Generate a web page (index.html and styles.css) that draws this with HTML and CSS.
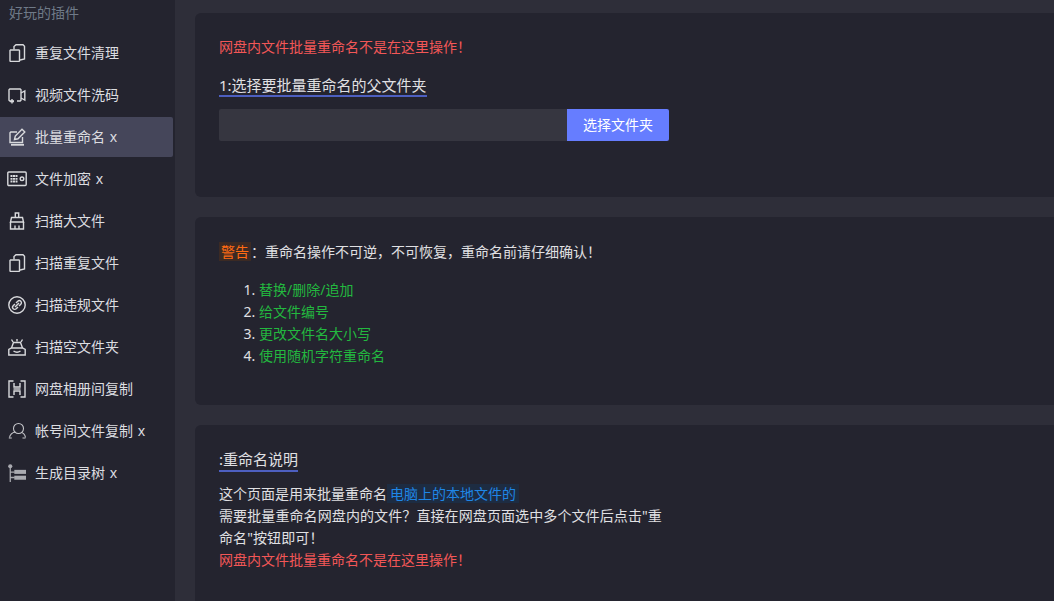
FILE: index.html
```html
<!DOCTYPE html>
<html lang="zh">
<head>
<meta charset="utf-8">
<title>批量重命名</title>
<link rel="stylesheet" href="styles.css">
</head>
<body>
<div class="app">
  <aside class="sidebar">
    <div class="side-title">好玩的插件</div>
    <nav class="menu">
      <a class="item"><svg class="ico" viewBox="0 0 18 18"><path d="M2.500 6h8.500l.5.5V17l-.5.500H2.500L2 17V6.500z"/><path d="M6 5.500V2.500L8 .8h7l1.500 1.500V15l-4.500 1"/></svg><span>重复文件清理</span></a>
      <a class="item"><svg class="ico" viewBox="0 0 18 18"><path d="M6 15H1.800L1 14.200V3.800L1.800 3h10.400l.8.800v10.400l-.8.800H9"/><path d="M13 7l3.800-2v9L13 12"/><path d="M4 13v4.500M2 15.500h4"/></svg><span>视频文件洗码</span></a>
      <a class="item active"><svg class="ico" viewBox="0 0 18 18"><path d="M9 4H2.800L2 4.800V14.500h12.500V9"/><path d="M6.500 11.500l.8-3.500L14 1.200 16.800 4 10 10.800z"/><path class="thick" d="M3 16.800h13"/></svg><span>批量重命名 x</span></a>
      <a class="item"><svg class="ico wide" viewBox="0 0 20 18"><rect x=".8" y="2" width="18.400" height="13.500" rx="1"/><path class="thick dash" d="M3.500 6h7M3.500 8.800h7M3.500 11.500h7"/><circle cx="15" cy="8.800" r="1.800"/></svg><span>文件加密 x</span></a>
      <a class="item"><svg class="ico" viewBox="0 0 18 18"><path d="M7.300 5.500V1h3.400v4.500"/><path d="M3.500 5.500h11l1 4.500h-13z"/><path d="M2.500 10v7h13v-7"/><path d="M7 17v-3.500M11 17v-3.500"/></svg><span>扫描大文件</span></a>
      <a class="item"><svg class="ico" viewBox="0 0 18 18"><path d="M2.500 6h8.500l.5.5V17l-.5.500H2.500L2 17V6.500z"/><path d="M6 5.500V2.500L8 .8h7l1.500 1.500V15l-4.500 1"/></svg><span>扫描重复文件</span></a>
      <a class="item"><svg class="ico wide" viewBox="0 0 18 18"><circle cx="9" cy="9" r="8.200"/><path d="M8 7l1.800-1.800a2.100 2.100 0 0 1 3 3L11 10"/><path d="M10 11l-1.800 1.800a2.100 2.100 0 0 1-3-3L7 8"/><path d="M7 11l4-4"/></svg><span>扫描违规文件</span></a>
      <a class="item"><svg class="ico" viewBox="0 0 18 18"><path d="M.8 17h16.400v-5.500L14.500 10h-11L.8 11.500z"/><path d="M3.500 10l2-5.500h7l2 5.500"/><path d="M5 4L3.500 1.500M13 4l1.500-2.500M9 3.500V1"/><path d="M5.500 13c2 1.500 5 1.500 7 0"/></svg><span>扫描空文件夹</span></a>
      <a class="item"><svg class="ico" viewBox="0 0 18 18"><path d="M5.500 1H1v16h4.500M12.500 1H17v16h-4.500"/><path d="M6 3v4h6V3M6 15v-4h6v4"/><path d="M5.500 9h7"/></svg><span>网盘相册间复制</span></a>
      <a class="item"><svg class="ico thin" viewBox="0 0 18 18"><circle cx="10.500" cy="6.500" r="5"/><path d="M1.500 15.500c.5-3 3-5 6-5.500"/><path d="M13.500 10.500c2 .5 3.500 2.500 4 5"/><path d="M.8 16h3M14.500 16h3"/></svg><span>帐号间文件复制 x</span></a>
      <a class="item"><svg class="ico wide" viewBox="0 0 20 20"><circle class="fill" cx="2.500" cy="2.500" r="2.300"/><path class="tree" d="M2.500 4v16M2.500 9h5M2.500 15h5"/><rect class="fill" x="7" y="6.500" width="13" height="4.500"/><rect class="fill" x="7" y="13" width="13" height="4.500"/></svg><span>生成目录树 x</span></a>
    </nav>
  </aside>
  <main class="main">
    <section class="card card-one">
      <p class="danger">网盘内文件批量重命名不是在这里操作！</p>
      <h3 class="heading">1:选择要批量重命名的父文件夹</h3>
      <div class="picker">
        <div class="path"></div>
        <button class="btn">选择文件夹</button>
      </div>
    </section>
    <section class="card card-two">
      <p class="warn-line"><mark class="warn">警告</mark>：重命名操作不可逆，不可恢复，重命名前请仔细确认！</p>
      <ol class="list">
        <li><span>替换/删除/追加</span></li>
        <li><span>给文件编号</span></li>
        <li><span>更改文件名大小写</span></li>
        <li><span>使用随机字符重命名</span></li>
      </ol>
    </section>
    <section class="card card-three">
      <h3 class="heading">:重命名说明</h3>
      <div class="desc">
        <div>这个页面是用来批量重命名<mark class="info">电脑上的本地文件的</mark></div>
        <div class="spaced">需要批量重命名网盘内的文件？直接在网盘页面选中多个文件后点击"重命名"按钮即可！</div>
        <div class="danger-inline">网盘内文件批量重命名不是在这里操作！</div>
      </div>
    </section>
  </main>
</div>
</body>
</html>
```
FILE: styles.css
```css
* { box-sizing: border-box; }
html, body { margin: 0; height: 100%; overflow: hidden; }
body {
  background: #2e2e39;
  color: #e0e0e3;
  font: 14px/22px "Noto Sans", "Noto Sans CJK SC", sans-serif;
}
.app { display: flex; height: 601px; overflow: hidden; }
.sidebar { width: 175px; flex: none; background: #24242f; }
.side-title { height: 22px; padding-left: 9px; line-height: 26px; color: #6f7a88; }
.menu { display: flex; flex-direction: column; padding-top: 11px; }
.item {
  display: flex; align-items: center; gap: 9px;
  width: 173px; height: 40px; margin-bottom: 2px;
  padding-left: 8px; color: #dcdde0; border-radius: 0 2px 2px 0;
  word-spacing: 1px;
}
.item span { line-height: 40px; height: 40px; }
.item.active { background: #45465a; }
.ico {
  width: 18px; height: 18px; flex: none;
  fill: none; stroke: #d8d9dc; stroke-width: 1.400;
}
.ico.wide { width: 20px; margin-left: -1px; margin-right: -1px; }
.ico.thin { stroke: #c4c5c9; stroke-width: 1.100; }
.ico .thick { stroke-width: 1.800; }
.ico .dash { stroke-dasharray: 2 .5; }
.ico .tree { stroke: #a9aab0; }
.ico .fill { fill: #a9aab0; stroke: none; }
.main { flex: none; width: 880px; padding: 13px 0 0 20px; display: flex; flex-direction: column; gap: 20px; }
.card { flex: none; width: 900px; background: #24242f; border-radius: 6px; padding: 23px 24px 24px; }
.card-one { height: 184px; }
.card-two { height: 188px; padding-top: 24px; }
.card-three { height: 300px; }
p { margin: 0; }
.danger { color: #f25757; }
.heading {
  display: table; margin: 17px 0 0; font-size: 15px; font-weight: 400;
  line-height: 20px; color: #e0e0e3; border-bottom: 2px solid #4d5fc0;
}
.picker { display: flex; width: 450px; height: 32px; margin-top: 12px; }
.path { flex: 1; background: #363640; border-radius: 2px 0 0 2px; }
.btn {
  width: 102px; border: 0; padding: 0; color: #fff; background: #667dff;
  border-radius: 0 2px 2px 0; font: inherit;
}
.warn { background: #3b2a24; color: #ff6a13; padding: 0 2px; }
.list { margin: 16px 0 0; padding: 0 0 0 40px; }
.list span { color: #23b83f; }
.card-three .heading { margin-top: 1px; padding-bottom: 1px; }
.desc { width: 450px; margin-top: 11px; }
.spaced { letter-spacing: .1px; }
.info { background: #1d2c42; color: #1f86e6; padding: 0 3px; }
.danger-inline { color: #f25757; }
```
